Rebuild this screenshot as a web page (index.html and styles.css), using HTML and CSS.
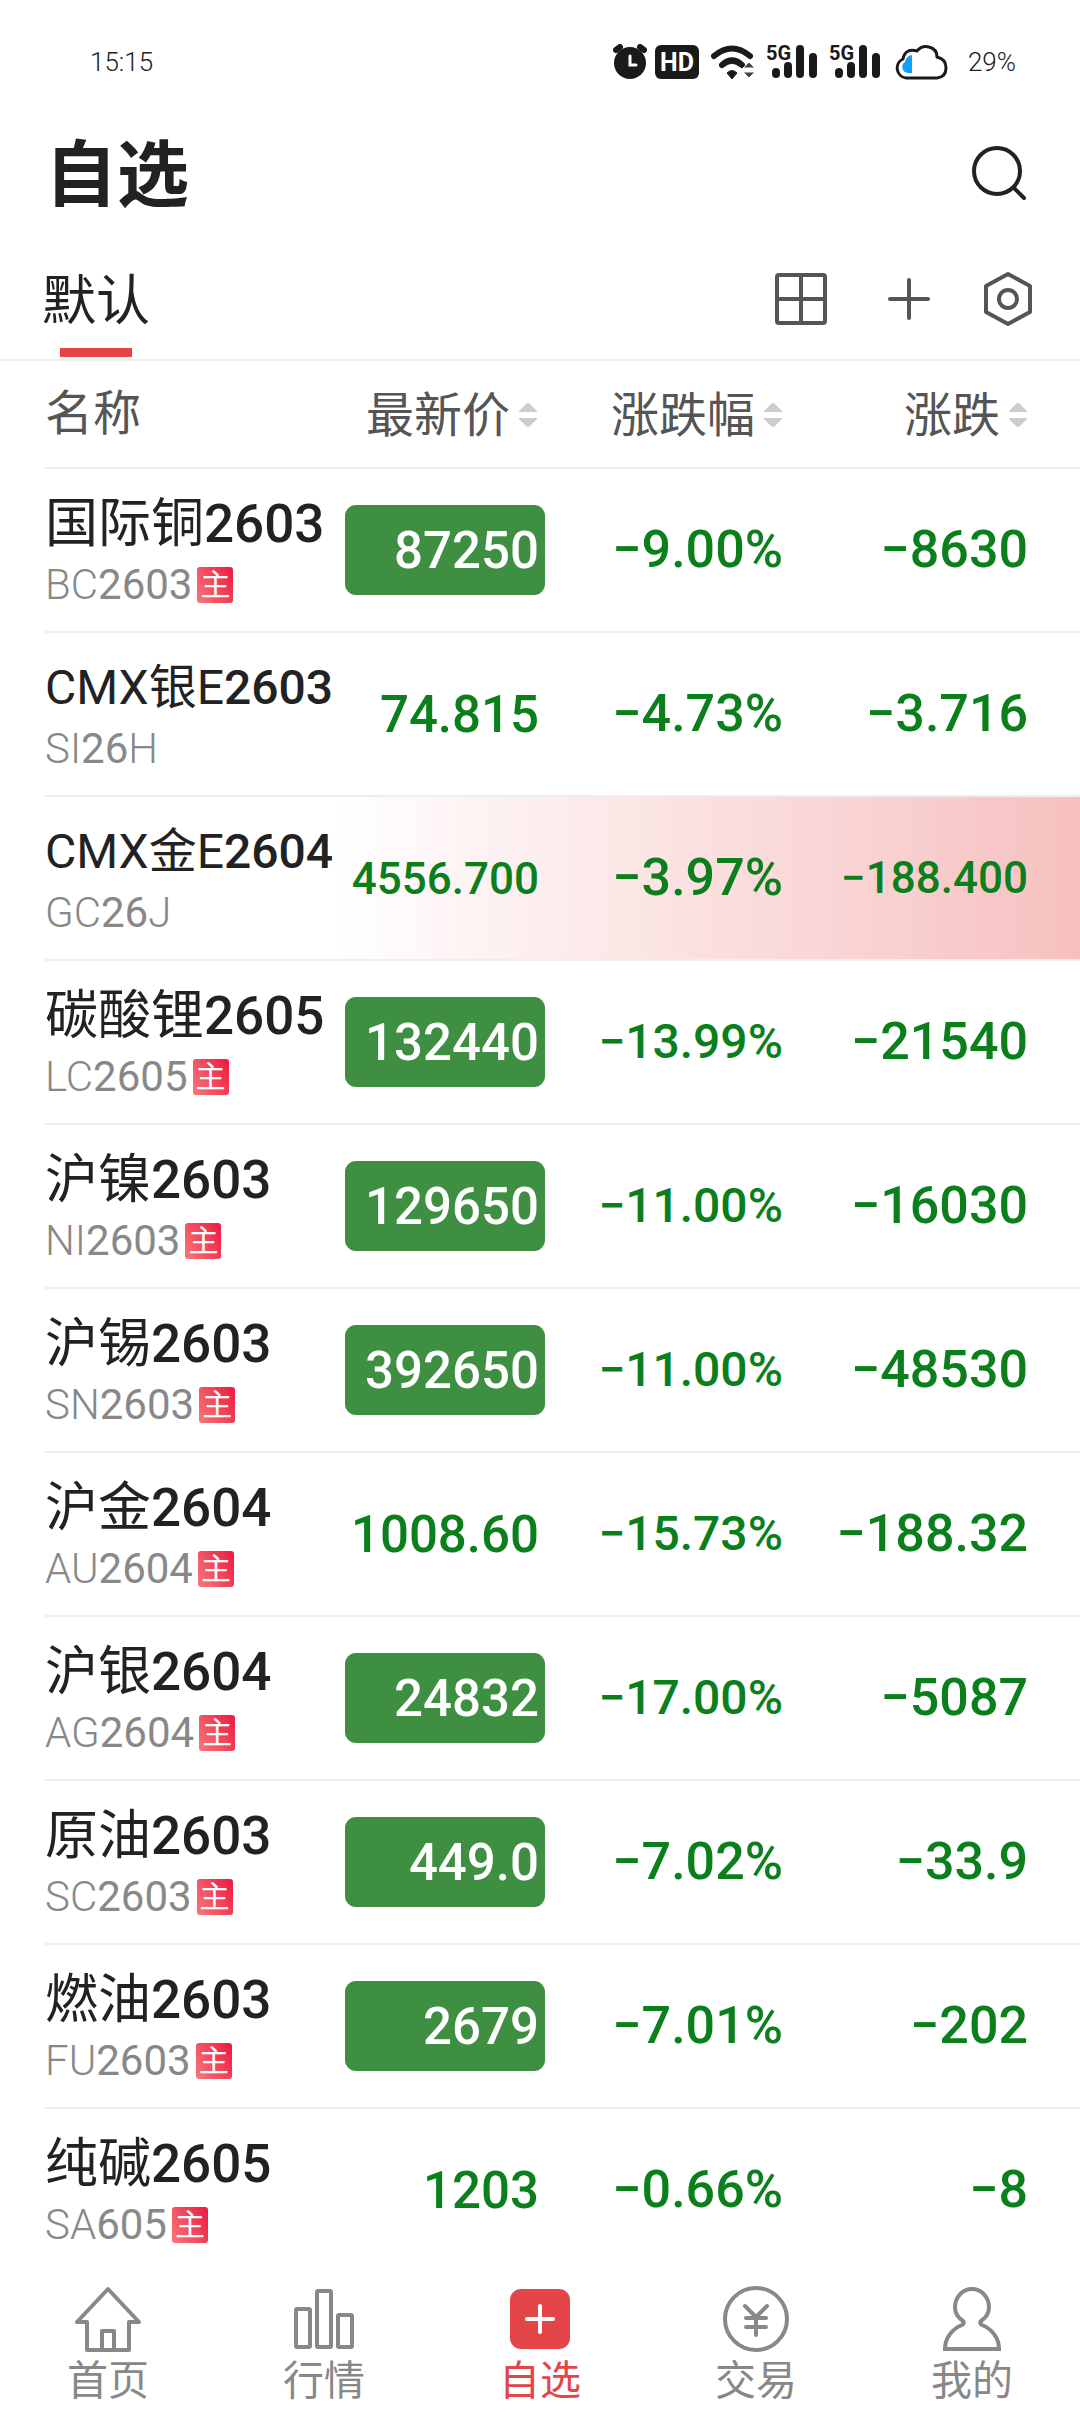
FILE: index.html
```html
<!DOCTYPE html>
<html lang="zh-CN">
<head>
<meta charset="utf-8">
<meta name="viewport" content="width=device-width">
<title>自选</title>
<link rel="stylesheet" href="styles.css">
</head>
<body>
<div class="status">
  <span class="status-text">15:15</span>
  <div class="status-icons">
    <svg width="34" height="36" viewBox="0 0 34 36"><circle cx="17" cy="19" r="16" fill="#1a1a1a"/><path d="M3 6l4-3M31 6l-4-3" stroke="#1a1a1a" stroke-width="6" stroke-linecap="round"/><path d="M17 12v9h6" fill="none" stroke="#fff" stroke-width="3" stroke-linecap="round"/></svg>
    <svg class="hd" width="44" height="36" viewBox="0 0 44 36"><rect y="1" width="44" height="34" rx="6" fill="#1a1a1a"/><text x="22" y="27" text-anchor="middle" font-size="25" fill="#fff">HD</text></svg>
    <svg class="wifi" width="44" height="36" viewBox="0 0 44 36"><path d="M3 12Q21-3 39 12" fill="none" stroke="#1a1a1a" stroke-width="6" stroke-linecap="round"/><path d="M11 21Q21 12 31 21" fill="none" stroke="#1a1a1a" stroke-width="6" stroke-linecap="round"/><path d="M16 29q5-5 10 0l-5 6z" fill="#1a1a1a" stroke="#1a1a1a" stroke-linejoin="round"/><path d="M32 24l6-6 6 6zM32 28l6 6 6-6z" fill="#444" stroke="#fff"/></svg>
    <svg class="signal" width="52" height="52" viewBox="0 -8 52 52"><text x="0" y="16" font-size="20" fill="#1a1a1a">5G</text><path d="M10 28v2M22 22v8M34 5v25M47 13v17" stroke="#1a1a1a" stroke-width="8" stroke-linecap="round"/></svg>
    <svg class="signal" width="52" height="52" viewBox="0 -8 52 52"><text x="0" y="16" font-size="20" fill="#1a1a1a">5G</text><path d="M10 28v2M22 22v8M34 5v25M47 13v17" stroke="#1a1a1a" stroke-width="8" stroke-linecap="round"/></svg>
    <svg class="cloud" width="54" height="36" viewBox="0 0 54 36"><path d="M18 11v18h-4a6 6 0 0 1-3-11q1-6 7-7z" fill="#12a0f8"/><path d="M12 34a10 10 0 0 1-3-19q2-11 14-8Q28 1 35 3q8 2 8 10 9 2 9 11 0 9-9 10z" fill="none" stroke="#1a1a1a" stroke-width="3" stroke-linejoin="round"/></svg>
    <span class="status-text">29%</span>
  </div>
</div>

<header class="header">
  <h1>自选</h1>
  <button class="icon-button" aria-label="搜索"><svg width="60" height="60" viewBox="0 0 60 60" fill="none" stroke="#222" stroke-width="4" stroke-linecap="round"><circle cx="29" cy="29" r="23"/><path d="M46 46l10 10"/></svg></button>
</header>

<div class="tabs">
  <button class="tab">默认</button>
  <div class="tools">
    <button class="icon-button" aria-label="布局"><svg width="60" height="60" viewBox="0 0 60 60" fill="none" stroke="#555" stroke-width="4"><rect x="6" y="6" width="48" height="48" rx="2"/><path d="M30 6v48M6 30h48"/></svg></button>
    <button class="icon-button" aria-label="添加"><svg width="60" height="60" viewBox="0 0 60 60" fill="none" stroke="#555" stroke-width="4" stroke-linecap="round"><path d="M30 11v38M11 30h38"/></svg></button>
    <button class="icon-button" aria-label="设置"><svg width="60" height="60" viewBox="0 0 60 60" fill="none" stroke="#555" stroke-width="4" stroke-linejoin="round"><path d="M30 5l22 12v26L30 55 8 43V17z"/><circle cx="30" cy="30" r="9"/></svg></button>
  </div>
</div>

<main>
<table class="quotes">
  <colgroup><col><col class="col-price"><col class="col-percent"><col class="col-change"></colgroup>
  <thead>
    <tr>
      <th scope="col">名称</th>
      <th scope="col"><button class="sort">最新价<svg width="20" height="26" viewBox="0 0 20 26" fill="#ccc"><path d="M1 10v-1l7-7q2-2 4 0l7 7v1zM1 16v1l7 7q2 2 4 0l7-7v-1z"/></svg></button></th>
      <th scope="col"><button class="sort">涨跌幅<svg width="20" height="26" viewBox="0 0 20 26" fill="#ccc"><path d="M1 10v-1l7-7q2-2 4 0l7 7v1zM1 16v1l7 7q2 2 4 0l7-7v-1z"/></svg></button></th>
      <th scope="col"><button class="sort">涨跌<svg width="20" height="26" viewBox="0 0 20 26" fill="#ccc"><path d="M1 10v-1l7-7q2-2 4 0l7 7v1zM1 16v1l7 7q2 2 4 0l7-7v-1z"/></svg></button></th>
    </tr>
  </thead>
  <tbody>
    <tr><td><div class="name">国际铜<b>2603</b></div><div class="code">BC<b>2603</b><i class="main-badge">主</i></div></td><td><span class="price flat">87250</span></td><td>−9.00%</td><td>−8630</td></tr>
    <tr><td><div class="name long">CMX银E<b>2603</b></div><div class="code">SI<b>26</b>H</div></td><td><span class="price">74.815</span></td><td>−4.73%</td><td>−3.716</td></tr>
    <tr class="flash"><td><div class="name long">CMX金E<b>2604</b></div><div class="code">GC<b>26</b>J</div></td><td><span class="price small">4556.700</span></td><td>−3.97%</td><td class="small">−188.400</td></tr>
    <tr><td><div class="name">碳酸锂<b>2605</b></div><div class="code">LC<b>2605</b><i class="main-badge">主</i></div></td><td><span class="price flat">132440</span></td><td class="medium">−13.99%</td><td>−21540</td></tr>
    <tr><td><div class="name">沪镍<b>2603</b></div><div class="code">NI<b>2603</b><i class="main-badge">主</i></div></td><td><span class="price flat">129650</span></td><td class="medium">−11.00%</td><td>−16030</td></tr>
    <tr><td><div class="name">沪锡<b>2603</b></div><div class="code">SN<b>2603</b><i class="main-badge">主</i></div></td><td><span class="price flat">392650</span></td><td class="medium">−11.00%</td><td>−48530</td></tr>
    <tr><td><div class="name">沪金<b>2604</b></div><div class="code">AU<b>2604</b><i class="main-badge">主</i></div></td><td><span class="price">1008.60</span></td><td class="medium">−15.73%</td><td>−188.32</td></tr>
    <tr><td><div class="name">沪银<b>2604</b></div><div class="code">AG<b>2604</b><i class="main-badge">主</i></div></td><td><span class="price flat">24832</span></td><td class="medium">−17.00%</td><td>−5087</td></tr>
    <tr><td><div class="name">原油<b>2603</b></div><div class="code">SC<b>2603</b><i class="main-badge">主</i></div></td><td><span class="price flat">449.0</span></td><td>−7.02%</td><td>−33.9</td></tr>
    <tr><td><div class="name">燃油<b>2603</b></div><div class="code">FU<b>2603</b><i class="main-badge">主</i></div></td><td><span class="price flat">2679</span></td><td>−7.01%</td><td>−202</td></tr>
    <tr><td><div class="name">纯碱<b>2605</b></div><div class="code">SA<b>605</b><i class="main-badge">主</i></div></td><td><span class="price">1203</span></td><td>−0.66%</td><td>−8</td></tr>
  </tbody>
</table>
</main>

<nav class="nav">
  <a href="#home"><svg width="68" height="68" viewBox="0 0 68 68" fill="none" stroke="#888" stroke-width="4" stroke-linejoin="round"><path d="M34 4L3 37h10v28h42V37h10z"/><path d="M28 65V46h12v19"/></svg>首页</a>
  <a href="#market"><svg width="68" height="68" viewBox="0 0 68 68" fill="none" stroke="#888" stroke-width="4"><rect x="6" y="24" width="14" height="38" rx="1"/><rect x="27" y="6" width="14" height="56" rx="1"/><rect x="48" y="30" width="14" height="32" rx="1"/></svg>行情</a>
  <a href="#watchlist" class="active" aria-current="page"><svg width="68" height="68" viewBox="0 0 68 68"><rect x="4" y="4" width="60" height="60" rx="11" fill="#e34549"/><path d="M34 21v26M21 34h26" stroke="#fff" stroke-width="4" stroke-linecap="round"/></svg>自选</a>
  <a href="#trade"><svg width="68" height="68" viewBox="0 0 68 68" fill="none" stroke="#888" stroke-width="4" stroke-linecap="round" stroke-linejoin="round"><circle cx="34" cy="34" r="31"/><path d="M23 21l11 11 11-11M34 32v18M24 33h20M24 42h20"/></svg>交易</a>
  <a href="#mine"><svg width="68" height="68" viewBox="0 0 68 68" fill="none" stroke="#888" stroke-width="4"><path d="M25 36C19 32 17 28 17 22a17 18 0 0 1 34 0c0 6-2 10-8 14q-2 2 1 4c10 4 17 13 17 24H7C7 53 14 44 24 40q3-2 1-4z"/></svg>我的</a>
</nav>
</body>
</html>
```

FILE: styles.css
```css
* { box-sizing: border-box; }

body {
  margin: 0;
  min-height: 100vh;
  display: flex;
  flex-direction: column;
  background: #fff;
  color: #222;
  font-family: Roboto, "Noto Sans CJK SC", sans-serif;
}

button {
  margin: 0;
  padding: 0;
  border: 0;
  background: none;
  color: inherit;
  font: inherit;
}

svg { display: block; flex: none; }

.status {
  display: flex;
  justify-content: space-between;
  align-items: center;
  height: 122px;
  padding: 2px 64px 0 90px;
}
.status-icons { display: flex; align-items: center; }
.status-text { font-size: 26px; font-weight: 300; line-height: 32px; }
.hd { margin-left: 8px; }
.wifi { margin-left: 12px; }
.signal { margin-left: 11px; }
.cloud { margin: 0 20px 0 13px; }
.status text { font-family: Roboto, sans-serif; font-weight: 700; }

.header {
  display: flex;
  justify-content: space-between;
  align-items: center;
  height: 100px;
  padding: 0 52px 0 45px;
}
h1 { margin: 0; padding-top: 8px; font-size: 72px; line-height: 92px; font-weight: 700; }

.tabs {
  display: flex;
  justify-content: space-between;
  align-items: flex-start;
  padding: 47px 42px 2px 42px;
  border-bottom: 2px solid #eee;
}
.tab { display: flex; flex-direction: column; align-items: center; gap: 13px; font-size: 54px; line-height: 66px; }
.tab::after { content: ""; width: 72px; height: 9px; background: #e34549; }
.tools { display: flex; }
.tools .icon-button:nth-child(2) { margin: 0 39px 0 48px; }

main { padding-left: 45px; }
.quotes { width: 100%; table-layout: fixed; border-spacing: 0; }
.col-price { width: 200px; }
.col-percent { width: 245px; }
.col-change { width: 290px; }

th, td { padding: 0; border-bottom: 2px solid #eee; text-align: right; white-space: nowrap; }
th { height: 108px; color: #555; font-size: 48px; line-height: 60px; font-weight: 400; }
th:first-child, td:first-child { text-align: left; }
th:nth-child(2), th:nth-child(3), td:nth-child(3) { padding-right: 7px; }
th:nth-child(4), td:nth-child(4) { padding-right: 52px; }
.sort { display: inline-flex; align-items: center; gap: 8px; vertical-align: middle; }
.sort svg { margin-bottom: 2px; }

td { height: 164px; color: #0a7f1b; font-size: 52px; line-height: 92px; font-weight: 500; }
tbody tr:last-child td { height: 162px; border-bottom: 0; }
.flash { background: linear-gradient(90deg, transparent 28%, #f7c0c0); }

.name { margin-bottom: 5px; color: #222; font-size: 53px; line-height: 64px; font-weight: 400; }
.name.long { font-size: 48px; }
.code { display: flex; align-items: center; color: #888; font-size: 42px; line-height: 48px; font-weight: 300; }
.name b { font-weight: 500; }
.code b { font-weight: 400; }

.main-badge {
  width: 36px;
  height: 36px;
  margin-left: 5px;
  border-radius: 3px;
  background: linear-gradient(60deg, #f87878, #ee1840);
  color: #fff;
  font-size: 30px;
  line-height: 36px;
  font-style: normal;
  font-weight: 400;
  text-align: center;
}

.price { display: block; height: 90px; padding-right: 6px; border-radius: 11px; font-size: 51px; }
.price.flat { background: #3e8f41; color: #fff; }
.medium { font-size: 48px; }
.small { font-size: 44px; }

.nav { display: flex; margin-top: auto; padding: 14px 0 8px; background: #fff; }
.nav a {
  flex: 1;
  display: flex;
  flex-direction: column;
  align-items: center;
  gap: 5px;
  color: #888;
  font-size: 41px;
  line-height: 46px;
  text-decoration: none;
}
.nav .active { color: #e34549; }
```
